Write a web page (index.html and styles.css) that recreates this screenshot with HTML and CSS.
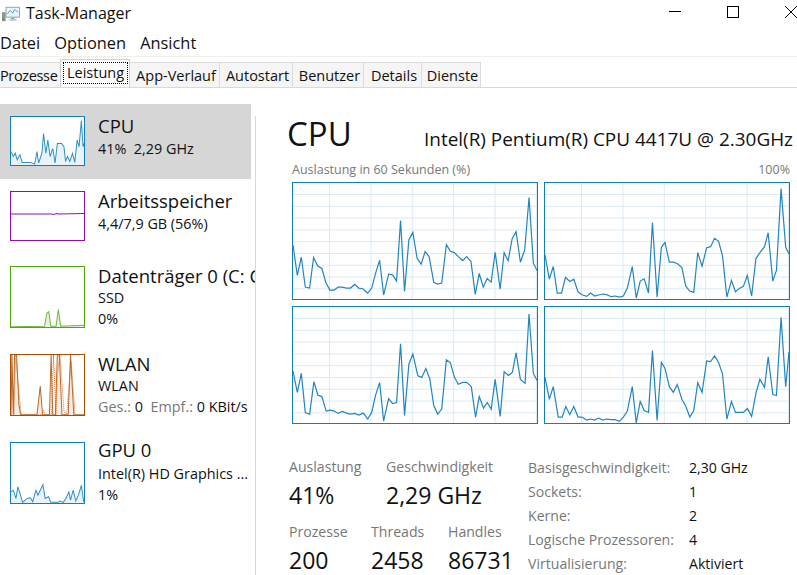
FILE: index.html
```html
<!DOCTYPE html>
<html lang="de">
<head>
  <meta charset="UTF-8">
  <meta name="viewport" content="width=device-width, initial-scale=1.0">
  <title>Task-Manager</title>
  <link rel="stylesheet" href="styles.css">
</head>
<body>
  <div class="titlebar">
    <svg class="app-icon" viewBox="0 0 20 18">
      <rect x="0" y="7" width="4" height="10" fill="#8a9a8a"/>
      <rect x="1" y="13" width="2" height="3" fill="#4caf32"/>
      <rect x="4.5" y="1.5" width="15" height="11" fill="#eaf5fc" stroke="#8c9aa6"/>
      <polyline points="6,9 9,5 12,8 14,4 18,7" fill="none" stroke="#3c9ad6"/>
      <rect x="10" y="13" width="4" height="2" fill="#9aa4ac"/>
      <rect x="8" y="15" width="8" height="1.5" fill="#b4bcc2"/>
    </svg>
    <span class="app-title">Task-Manager</span>
    <div class="win-controls">
      <svg viewBox="0 0 12 12"><line x1="0" y1="5.5" x2="12" y2="5.5"/></svg>
      <svg viewBox="0 0 12 12"><rect x="0.5" y="0.5" width="11" height="11"/></svg>
      <svg viewBox="0 0 12 12"><line x1="0" y1="0" x2="12" y2="12"/><line x1="12" y1="0" x2="0" y2="12"/></svg>
    </div>
  </div>

  <div class="menubar">
    <span>Datei</span>
    <span>Optionen</span>
    <span>Ansicht</span>
  </div>

  <div class="tabs">
    <div class="tab tab-prozesse">Prozesse</div>
    <div class="tab active tab-leistung"><span>Leistung</span></div>
    <div class="tab tab-verlauf">App-Verlauf</div>
    <div class="tab tab-autostart">Autostart</div>
    <div class="tab tab-benutzer">Benutzer</div>
    <div class="tab tab-details">Details</div>
    <div class="tab tab-dienste">Dienste</div>
  </div>

  <div class="content">
    <div class="sidebar">
      <div class="item selected">
        <svg class="mini mini-short cpu" viewBox="31 349 222 147" preserveAspectRatio="none">
          <polygon class="area" points="31,496 31,455 38,470 44,460 50,480 58,465 65,488 90,488 103,493 110,455 115,490 125,460 130,400 137,460 143,420 150,470 158,445 165,490 172,430 185,430 192,440 197,485 203,470 210,485 218,460 225,488 232,420 238,440 245,360 250,440 253,430 253,496"/>
          <polyline class="line" points="31,455 38,470 44,460 50,480 58,465 65,488 90,488 103,493 110,455 115,490 125,460 130,400 137,460 143,420 150,470 158,445 165,490 172,430 185,430 192,440 197,485 203,470 210,485 218,460 225,488 232,420 238,440 245,360 250,440 253,430"/>
        </svg>
        <div class="item-text">
          <div class="item-name">CPU</div>
          <div class="item-sub">41%&nbsp; 2,29 GHz</div>
        </div>
      </div>
      <div class="item">
        <svg class="mini mini-short mem" viewBox="31 34 222 147" preserveAspectRatio="none">
          <polyline class="line" points="31,101 155,101 160,103 170,100 175,101 253,100"/>
        </svg>
        <div class="item-text">
          <div class="item-name">Arbeitsspeicher</div>
          <div class="item-sub">4,4/7,9 GB (56%)</div>
        </div>
      </div>
      <div class="item">
        <svg class="mini disk" viewBox="31 259 222 183" preserveAspectRatio="none">
          <polygon class="area" points="31,442 133,440 140,400 146,395 152,440 168,440 175,388 182,440 253,437 253,442"/>
          <polyline class="line" points="31,441 133,440 140,400 146,395 152,440 168,440 175,388 182,440 253,437"/>
        </svg>
        <div class="item-text item-clip">
          <div class="item-name">Datenträger 0 (C: C</div>
          <div class="item-sub">SSD</div>
          <div class="item-sub">0%</div>
        </div>
      </div>
      <div class="item">
        <svg class="mini wlan" viewBox="31 41 222 182" preserveAspectRatio="none">
          <polygon class="area" points="31,222 34,41 38,222 42,41 48,41 55,190 60,222 110,222 120,135 127,222 148,222 153,41 158,222 166,222 172,41 178,41 186,222 205,222 212,41 222,222"/>
          <polyline class="dots" points="31,41 40,222 45,41 52,120 62,222 125,222 130,210 135,222 155,222 160,41 168,222 172,100 180,41 192,210 200,222 214,60 226,222"/>
          <polyline class="line" points="31,222 34,41 38,222 42,41 48,41 55,190 60,222 110,222 120,135 127,222 148,222 153,41 158,222 166,222 172,41 178,41 186,222 205,222 212,41 222,222 253,222"/>
        </svg>
        <div class="item-text">
          <div class="item-name">WLAN</div>
          <div class="item-sub">WLAN</div>
          <div class="item-sub"><span class="muted">Ges.:</span> 0&nbsp; <span class="muted">Empf.:</span> 0 KBit/s</div>
        </div>
      </div>
      <div class="item">
        <svg class="mini gpu" viewBox="31 301 222 183" preserveAspectRatio="none">
          <polygon class="area" points="31,484 31,450 38,445 46,470 52,435 60,460 66,482 80,470 90,468 97,480 107,445 113,460 120,445 128,428 135,470 145,465 152,482 175,482 180,478 190,482 198,470 207,450 212,475 220,445 228,478 236,460 245,430 252,480 253,484"/>
          <polyline class="line" points="31,450 38,445 46,470 52,435 60,460 66,482 80,470 90,468 97,480 107,445 113,460 120,445 128,428 135,470 145,465 152,482 175,482 180,478 190,482 198,470 207,450 212,475 220,445 228,478 236,460 245,430 252,480"/>
        </svg>
        <div class="item-text">
          <div class="item-name item-name-tight">GPU 0</div>
          <div class="item-sub">Intel(R) HD Graphics ...</div>
          <div class="item-sub">1%</div>
        </div>
      </div>
    </div>

    <div class="main">
      <div class="heading">
        <span class="heading-title">CPU</span>
        <span class="heading-model">Intel(R) Pentium(R) CPU 4417U @ 2.30GHz</span>
      </div>
      <div class="graph-caption">
        <span>Auslastung in 60 Sekunden (%)</span>
        <span>100%</span>
      </div>
      <div class="cores">
        <div class="core">
          <svg viewBox="22 68 735 350" preserveAspectRatio="none">
            <polyline points="22,255 35,347 47,292 59,382 72,385 84,293 96,318 109,326 121,368 133,391 146,391 158,382 170,382 183,385 195,385 208,374 220,385 232,387 247,400 259,385 271,340 283,301 295,406 310,343 322,345 334,364 346,181 358,395 371,240 383,217 396,296 408,313 420,275 432,290 446,368 458,373 470,370 484,254 496,274 508,278 520,290 533,302 545,290 558,304 571,404 583,341 595,382 607,356 619,367 631,277 646,388 658,278 670,303 682,237 694,215 707,307 720,270 733,112 746,310 757,332"/>
          </svg>
        </div>
        <div class="core">
          <svg viewBox="22 68 738 350" preserveAspectRatio="none">
            <polyline points="22,285 35,358 47,320 59,400 72,400 84,353 97,365 109,358 122,397 134,405 148,410 160,400 172,409 184,406 197,403 209,405 222,411 234,409 247,412 259,409 271,385 286,320 298,415 310,364 322,357 335,400 347,187 361,412 374,262 385,247 398,307 410,307 422,311 436,323 448,380 460,394 472,398 484,278 497,319 511,263 523,260 535,235 547,244 559,288 572,412 586,362 598,396 610,386 622,380 634,347 647,409 660,296 672,278 686,260 697,218 711,364 722,332 736,85 750,262 760,282"/>
          </svg>
        </div>
        <div class="core">
          <svg viewBox="22 19 735 351" preserveAspectRatio="none">
            <polyline points="22,213 35,277 47,220 59,338 72,344 85,245 97,286 109,290 122,334 134,331 146,334 158,341 171,335 183,340 195,343 208,341 220,346 234,340 247,358 259,338 271,285 283,248 295,364 310,296 322,311 334,308 346,130 358,347 371,192 383,161 398,227 410,232 422,205 434,236 446,317 458,343 470,328 484,179 496,187 508,231 520,253 533,247 545,247 559,260 572,352 583,290 596,325 607,308 619,328 631,238 646,350 658,215 671,226 683,216 694,158 707,238 721,250 733,40 746,220 757,241"/>
          </svg>
        </div>
        <div class="core">
          <svg viewBox="22 19 738 351" preserveAspectRatio="none">
            <polyline points="22,232 35,298 47,260 62,352 74,352 85,320 97,345 109,320 122,352 134,352 148,361 160,358 172,361 184,355 197,361 209,358 222,360 234,360 247,365 259,352 271,334 286,260 298,370 310,305 322,332 335,338 347,151 361,362 374,187 385,205 398,260 410,277 422,254 436,298 448,320 460,352 472,332 484,248 497,277 511,182 523,184 535,167 547,187 559,222 572,358 586,305 598,338 610,338 622,338 634,326 647,350 660,280 672,238 686,262 697,170 711,284 722,287 736,50 750,260 760,155"/>
          </svg>
        </div>
      </div>

      <div class="stats">
        <div class="stats-left">
          <div class="stat-row">
            <div class="stat stat-load">
              <div class="stat-label">Auslastung</div>
              <div class="stat-value">41%</div>
            </div>
            <div class="stat">
              <div class="stat-label">Geschwindigkeit</div>
              <div class="stat-value">2,29 GHz</div>
            </div>
          </div>
          <div class="stat-row">
            <div class="stat stat-proc">
              <div class="stat-label">Prozesse</div>
              <div class="stat-value">200</div>
            </div>
            <div class="stat stat-threads">
              <div class="stat-label">Threads</div>
              <div class="stat-value">2458</div>
            </div>
            <div class="stat">
              <div class="stat-label">Handles</div>
              <div class="stat-value">86731</div>
            </div>
          </div>
        </div>
        <div class="specs">
          <span class="spec-label">Basisgeschwindigkeit:</span><span>2,30 GHz</span>
          <span class="spec-label">Sockets:</span><span>1</span>
          <span class="spec-label">Kerne:</span><span>2</span>
          <span class="spec-label">Logische Prozessoren:</span><span>4</span>
          <span class="spec-label">Virtualisierung:</span><span>Aktiviert</span>
        </div>
      </div>
    </div>
  </div>
</body>
</html>
```

FILE: styles.css
```css
html, body {
  height: 100%;
}
body {
  margin: 0;
  height: 575px;
  overflow: hidden;
  background: #fff;
  color: #111;
  font-family: "Open Sans", "Noto Sans", sans-serif;
}

.titlebar {
  display: flex;
  align-items: center;
  height: 28px;
  padding-left: 2px;
}
.app-icon {
  width: 19px;
  height: 18px;
  margin-right: 5px;
}
.app-title {
  font-size: 16px;
  margin-top: -2px;
  margin-left: 1px;
  width: 106px;
  white-space: nowrap;
}
.win-controls {
  margin-left: 538px;
  display: flex;
  gap: 46px;
  margin-top: -4px;
}
.win-controls svg {
  width: 12px;
  height: 12px;
  flex: none;
  fill: none;
  stroke: #000;
  stroke-width: 1;
}

.menubar {
  display: flex;
  gap: 14px;
  height: 28px;
  align-items: center;
  font-size: 16.4px;
  border-bottom: 1px solid #f0f0e6;
}

.tabs {
  display: flex;
  height: 30px;
  align-items: flex-end;
  border-bottom: 1px solid #d9d9d9;
  font-size: 14.5px;
}
.tab {
  height: 24px;
  line-height: 26px;
  text-align: center;
  text-indent: 3px;
  background: #f5f5f5;
  border: 1px solid #dcdcdc;
  border-bottom: none;
  margin-right: -1px;
}
.tab-prozesse { width: 60px; border-left: none; text-align: left; text-indent: 0; letter-spacing: -0.35px; }
.tab-leistung { width: 68px; text-indent: 0; }
.tab-verlauf { width: 89px; }
.tab-autostart { width: 72px; }
.tab-benutzer { width: 70px; }
.tab-details { width: 57px; }
.tab-dienste { width: 58px; }
.tab.active {
  height: 27px;
  background: #fff;
  position: relative;
  z-index: 1;
  border-color: #d0d0d0;
}
.tab.active span {
  display: block;
  margin: 2px 1px 2px 2px;
  height: 22px;
  line-height: 21px;
  outline: 1px dotted #000;
  outline-offset: -1px;
}

.content {
  display: flex;
  margin-top: 16px;
}

.sidebar {
  width: 251px;
  flex: none;
}
.item {
  display: flex;
  padding: 12px 0 13px 10px;
  white-space: nowrap;
}
.item.selected {
  background: #d6d6d6;
}
.mini {
  display: block;
  width: 75px;
  height: 62px;
  box-sizing: border-box;
  flex: none;
  background: #fff;
  border: 1px solid;
  margin-right: 13px;
}
.mini-short {
  height: 50px;
}
.mini polyline, .mini polygon {
  vector-effect: non-scaling-stroke;
}
.mini .line {
  fill: none;
  stroke-width: 1;
}
.mini .area {
  stroke: none;
}
.mini .dots {
  fill: none;
  stroke: #d9783a;
  stroke-width: 1;
  stroke-dasharray: 1 1;
}
.cpu, .gpu { border-color: #117dbb; }
.cpu .line, .gpu .line { stroke: #2f8fc8; }
.cpu .area, .gpu .area { fill: #e8f3fa; }
.mem { border-color: #8b12ae; }
.mem .line { stroke: #8b12ae; }
.disk { border-color: #4da60c; }
.disk .line { stroke: #6fb83a; }
.disk .area { fill: #e6f3dc; }
.wlan { border-color: #a74f01; }
.wlan .line { stroke: #bb6a28; }
.wlan .area { fill: #f8ebdf; }

.item-text {
  width: 157px;
  flex: none;
}
/* the long drive name runs into the divider */
.item-clip {
  overflow: hidden;
}
.item-name {
  font-size: 18.5px;
  line-height: 22px;
  margin-top: -1px;
}
.item-name-tight {
  margin-top: -3px;
  margin-bottom: 2px;
}
.item-sub {
  font-size: 14.4px;
  line-height: 21px;
}
.mini-short + .item-text .item-sub {
  margin-top: 1px;
}
.muted {
  color: #777;
}

.main {
  flex: 1;
  min-width: 0;
  margin: 12px 0 0 4px;
  padding: 0 4px 0 31px;
  border-left: 1px solid #d8d8d8;
  height: 460px;
}
.heading {
  display: flex;
  justify-content: space-between;
  align-items: baseline;
  height: 39px;
}
.heading-title {
  font-size: 33px;
  line-height: 36px;
}
.heading-model {
  font-size: 18.95px;
  white-space: nowrap;
}
.graph-caption {
  display: flex;
  justify-content: space-between;
  margin: 6px 3px 0 5px;
  font-size: 12.5px;
  line-height: 18px;
  color: #777;
}
.cores {
  display: grid;
  grid-template-columns: 246px 246px;
  grid-auto-rows: 118px;
  gap: 6px;
  margin: 3px 0 0 5px;
}
.core {
  border: 1px solid #117dbb;
  background-color: #fff;
  background-image:
    linear-gradient(to right, #d9eaf4 1px, transparent 1px),
    linear-gradient(to bottom, #d9eaf4 1px, transparent 1px);
  background-size: 41.4px 100%, 100% 11.8px;
  background-position: 36px 0, 0 11px;
}
.core svg {
  display: block;
  width: 100%;
  height: 100%;
}
.core polyline {
  fill: none;
  stroke: #2285c2;
  stroke-width: 1.2;
  vector-effect: non-scaling-stroke;
}

.stats {
  display: flex;
  margin: 34px 0 0 2px;
}
.stats-left {
  width: 239px;
  flex: none;
}
.stat-row {
  display: flex;
  margin-bottom: 9px;
}
.stat-load { width: 97px; }
.stat-proc { width: 82px; }
.stat-threads { width: 77px; }
.stat-label {
  font-size: 14.1px;
  line-height: 18px;
  color: #777;
}
.stat-value {
  font-size: 23px;
  line-height: 38px;
}
.specs {
  display: grid;
  grid-template-columns: 161px auto;
  grid-auto-rows: 24px;
  align-items: center;
  font-size: 14.1px;
  margin-top: -3px;
  white-space: nowrap;
}
.spec-label {
  color: #777;
}
```
